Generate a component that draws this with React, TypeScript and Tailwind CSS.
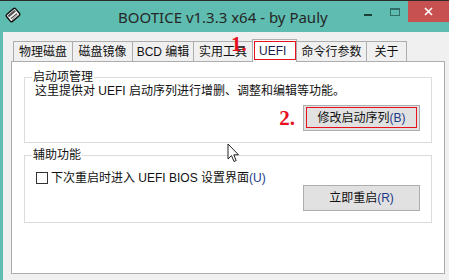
import React from 'react';

const font = { fontFamily: '"Liberation Sans", "Noto Sans CJK SC", sans-serif' };

const tabs = [
  { label: '物理磁盘', w: 'w-[60px]' },
  { label: '磁盘镜像', w: 'w-[61px]' },
  { label: 'BCD 编辑', w: 'w-[62px]' },
  { label: '实用工具', w: 'w-[60px]' },
  { label: 'UEFI', w: 'w-[45px]', active: true },
  { label: '命令行参数', w: 'w-[71px]' },
  { label: '关于', w: 'w-[41px]' },
];

const DiskIcon = () => (
  <svg width="18" height="18" viewBox="0 0 18 18">
    <g transform="rotate(-40 9 9)">
      <rect x="3" y="4.5" width="12" height="9" rx="1.5" fill="#f4f4f4" stroke="#111" strokeWidth="1.4" />
      <rect x="4.5" y="6" width="9" height="2.2" fill="#555" />
      <line x1="5" y1="10.5" x2="13" y2="10.5" stroke="#333" strokeWidth="1" />
      <line x1="5" y1="12" x2="13" y2="12" stroke="#888" strokeWidth="0.8" />
    </g>
  </svg>
);

const Cursor = () => (
  <svg width="13" height="20" viewBox="0 0 13 20">
    <path d="M1 1 L1 16 L4.5 12.5 L7 18.5 L9.2 17.6 L6.8 11.8 L11.5 11.8 Z" fill="#fff" stroke="#222" strokeWidth="1" strokeLinejoin="round" />
  </svg>
);

const Button: React.FC<{ children: React.ReactNode; marked?: boolean }> = ({ children, marked }) => (
  <div className="relative flex h-[26px] w-[117px] items-center justify-center border border-[#adadad] bg-[#e1e1e1] text-[12px] text-[#111]">
    {children}
    {marked && <div className="absolute left-[2px] right-[2px] top-[1px] bottom-[2px] border border-[#e8101c]" />}
  </div>
);

export default function App() {
  return (
    <div className="flex h-[280px] w-[449px] flex-col overflow-hidden bg-[#f0f0f0]" style={font}>
      {/* title bar */}
      <div className="flex h-[32px] shrink-0 items-center border-t border-[#2b2b2b] bg-[#5ebdb0]">
        <div className="ml-[4px] mt-[-3px]">
          <DiskIcon />
        </div>
        <div
          className="flex-1 pl-[96px] text-[15px] leading-[20px] text-[#262626]"
          style={{ fontFamily: '"Noto Sans", sans-serif' }}
        >
          BOOTICE v1.3.3 x64 - by Pauly
        </div>
        <div className="flex h-full items-start">
          <div className="flex h-[21px] w-[27px] items-center justify-center pt-[6px]">
            <div className="h-[2px] w-[8px] bg-[#1f3f3b]" />
          </div>
          <div className="flex h-[21px] w-[27px] items-center justify-center">
            <div className="h-[8px] w-[10px] border border-t-2 border-[#2f6d66]" />
          </div>
          <div className="flex h-[21px] w-[41px] items-center justify-center bg-[#c75050]">
            <svg width="9" height="9" viewBox="0 0 9 9">
              <path d="M1 1 L8 8 M8 1 L1 8" stroke="#fff" strokeWidth="1.6" />
            </svg>
          </div>
        </div>
      </div>

      {/* client area */}
      <div className="flex flex-1 flex-col border-l-[3px] border-[#5ebdb0] pb-[6px] pl-[8px] pr-[4px] pt-[7px]">
        {/* tab strip */}
        <div className="relative z-10 flex h-[22px] items-end pl-[2px]">
          {tabs.map((t) =>
            t.active ? (
              <div
                key={t.label}
                className={`relative -mb-px -ml-px flex h-[23px] items-center border-x border-t border-[#adadad] bg-white pl-[6px] text-[12px] text-[#1a1a4a] ${t.w}`}
              >
                {t.label}
                <div className="absolute left-[1px] right-[0px] top-[1px] bottom-[2px] border border-[#e8101c]" />
              </div>
            ) : (
              <div
                key={t.label}
                className={`-ml-px flex h-[20px] items-center justify-center border-x border-t border-[#adadad] bg-[#f0f0f0] text-[12px] text-[#111] first:ml-0 ${t.w}`}
              >
                {t.label}
              </div>
            ),
          )}
          <div
            className="absolute left-[220px] top-[-6px] text-[21px] font-bold leading-[22px] text-[#e8101c]"
            style={{ fontFamily: '"Liberation Serif", serif' }}
          >
            1.
          </div>
        </div>

        {/* panel */}
        <div className="relative flex flex-1 flex-col border border-[#adadad] bg-white px-[12px] pt-[7px] text-[12px] text-[#111]">
          <fieldset className="border border-[#dcdcdc] pb-[11px] pl-[10px] pr-[11px]">
            <legend className="-ml-[3px] px-[1px] leading-[16px]">启动项管理</legend>
            <div className="mt-[-2px] leading-[16px]">这里提供对 UEFI 启动序列进行增删、调整和编辑等功能。</div>
            <div className="mt-[6px] flex items-center justify-end gap-[8px]">
              <span
                className="text-[21px] font-bold leading-[22px] text-[#e8101c]"
                style={{ fontFamily: '"Liberation Serif", serif' }}
              >
                2.
              </span>
              <Button marked>
                修改启动序列<span className="text-[#1d3a8a]">(B)</span>
              </Button>
            </div>
          </fieldset>

          <fieldset className="mt-[4px] border border-[#dcdcdc] pb-[11px] pl-[11px] pr-[11px]">
            <legend className="-ml-[4px] px-[1px] leading-[16px]">辅助功能</legend>
            <div className="mt-[8px] flex h-[14px] items-center gap-[3px]">
              <div className="h-[12px] w-[12px] border border-[#333] bg-white" />
              <span className="leading-[14px]">
                下次重启时进入 UEFI BIOS 设置界面<span className="text-[#1d3a8a]">(U)</span>
              </span>
            </div>
            <div className="flex justify-end">
              <Button>
                立即重启<span className="text-[#1d3a8a]">(R)</span>
              </Button>
            </div>
          </fieldset>

          <div className="absolute left-[215px] top-[81px]">
            <Cursor />
          </div>
        </div>
      </div>
    </div>
  );
}
